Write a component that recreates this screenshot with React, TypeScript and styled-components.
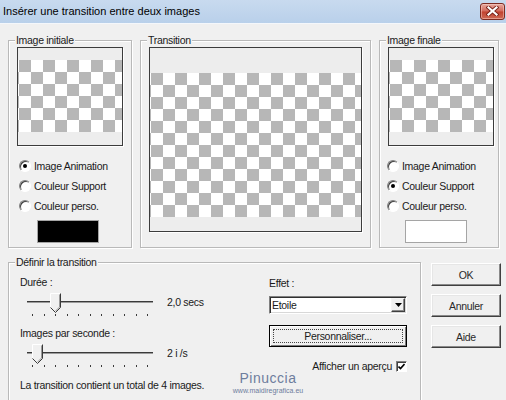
import * as React from 'react'
import styled, { createGlobalStyle } from 'styled-components'

const GlobalStyle = createGlobalStyle`
  html, body {
    margin: 0;
    padding: 0;
    background: #f0f0f0;
  }
  body {
    font-family: "Liberation Sans", Arial, sans-serif;
    font-size: 10.5px;
    letter-spacing: -0.3px;
    color: #1a1a1a;
  }
`

const Window = styled.div`
  width: 506px;
  height: 400px;
  overflow: hidden;
  background: #f0f0f0;
  display: flex;
  flex-direction: column;
`

const TitleBar = styled.div`
  box-sizing: border-box;
  height: 24px;
  flex: none;
  display: flex;
  align-items: center;
  justify-content: space-between;
  padding: 0 1px 1px 3px;
  background: linear-gradient(#c8daef, #b9d0ea);
  border-bottom: 1px solid #f4f7fb;
`

const Title = styled.span`
  font-size: 11px;
  letter-spacing: 0;
  color: #000;
`

const CloseButton = styled.div`
  box-sizing: border-box;
  width: 25px;
  height: 17px;
  display: flex;
  align-items: center;
  justify-content: center;
  border: 1px solid #7d2b22;
  border-radius: 3px;
  background: linear-gradient(#e7a99f, #d3685a 48%, #c1412f 52%, #cf6a55);
  box-shadow: inset 0 0 0 1px rgba(255, 220, 210, 0.45);
`

const Body = styled.div`
  padding: 10px 6px 0 8px;
`

const TopRow = styled.div`
  display: flex;
  gap: 8px;
  height: 214px;
`

const Group = styled.fieldset<{ $w: number; $h?: number; $pr?: number }>`
  position: relative;
  box-sizing: border-box;
  flex: none;
  width: ${p => p.$w}px;
  ${p => (p.$h ? `height: ${p.$h}px;` : '')}
  min-width: 0;
  margin: 0;
  padding: 0 ${p => p.$pr ?? 8}px 0 8px;
  border: 1px solid #b9b9b9;
  box-shadow: inset 1px 1px 0 #ffffff, 1px 1px 0 #ffffff;
`

const Legend = styled.legend`
  margin-left: -2px;
  padding: 0 1px;
  line-height: 13px;
  background: #f0f0f0;
`

const Frame = styled.div<{ $w: number; $h: number; $top: number }>`
  box-sizing: border-box;
  width: ${p => p.$w}px;
  height: ${p => p.$h}px;
  padding-top: ${p => p.$top}px;
  border: 1px solid #3c3c3c;
  box-shadow: 1px 1px 0 #ffffff;
  background: #ededed;
`

const Checker = styled.div<{ $rows: number }>`
  height: ${p => p.$rows * 12}px;
  background: repeating-conic-gradient(from 270deg, #b7b7b7 0 25%, #ffffff 0 50%) 1px 0 / 24px 24px;
`

const RadioList = styled.div<{ $indent: number }>`
  display: flex;
  flex-direction: column;
  margin: 10px 0 0 ${p => p.$indent}px;
`

const RadioRow = styled.label`
  display: flex;
  align-items: center;
  gap: 3px;
  height: 20px;
`

const Radio = styled.span<{ $on?: boolean }>`
  position: relative;
  box-sizing: border-box;
  width: 12px;
  height: 12px;
  border-radius: 50%;
  border: 1px solid;
  border-color: #808080 #ffffff #ffffff #808080;
  box-shadow: inset 1px 1px 0 #404040;
  background: #ffffff;

  &::after {
    content: '';
    display: ${p => (p.$on ? 'block' : 'none')};
    position: absolute;
    left: 3px;
    top: 3px;
    width: 4px;
    height: 4px;
    border-radius: 50%;
    background: #000;
  }
`

const Swatch = styled.div<{ $color: string }>`
  box-sizing: border-box;
  width: 62px;
  height: 23px;
  margin: 4px 0 0 18px;
  border: 1px solid #a5a5a5;
  background: ${p => p.$color};
`

const BottomRow = styled.div`
  display: flex;
  gap: 10px;
  margin-top: 8px;
`

const DefGrid = styled.div`
  position: relative;
  display: grid;
  grid-template-columns: 1fr 138px;
  padding: 7px 5px 0 3px;
`

const Column = styled.div`
  display: flex;
  flex-direction: column;
  align-items: flex-start;
`

const Label = styled.div<{ $mt?: number }>`
  line-height: 13px;
  margin-top: ${p => p.$mt ?? 0}px;
`

const SliderRow = styled.div`
  display: flex;
  gap: 14px;
  margin-top: 2px;
  padding-left: 7px;
`

const SliderBox = styled.div`
  position: relative;
  flex: none;
  width: 126px;
  height: 26px;
`

const Track = styled.div`
  position: absolute;
  left: 0;
  right: 0;
  top: 10px;
  border-top: 1px solid #3a3a3a;
  border-bottom: 1px solid #9c9c9c;
`

const ThumbSvg = styled.svg`
  position: absolute;
  top: 2px;
`

const Ticks = styled.div`
  position: absolute;
  left: 5px;
  right: 5px;
  top: 23px;
  display: flex;
  justify-content: space-between;
`

const Tick = styled.span`
  width: 1px;
  height: 2px;
  background: #3a3a3a;
`

const Value = styled.span`
  line-height: 22px;
`

const Summary = styled.div`
  line-height: 13px;
  margin-top: 11px;
`

const Combo = styled.div`
  box-sizing: border-box;
  width: 138px;
  height: 18px;
  margin-top: 6px;
  display: flex;
  align-items: center;
  justify-content: space-between;
  padding-left: 2px;
  border: 1px solid;
  border-color: #808080 #ffffff #ffffff #808080;
  box-shadow: inset 1px 1px 0 #303030, inset -1px -1px 0 #d8d8d8;
  background: #ffffff;
`

const ComboArrow = styled.span`
  box-sizing: border-box;
  width: 14px;
  height: 14px;
  margin-right: 1px;
  display: flex;
  align-items: center;
  justify-content: center;
  border: 1px solid;
  border-color: #f4f4f4 #404040 #404040 #f4f4f4;
  box-shadow: inset -1px -1px 0 #8a8a8a;
  background: #f0f0f0;
`

const PushButton = styled.div`
  position: relative;
  box-sizing: border-box;
  width: 138px;
  height: 22px;
  margin-top: 11px;
  display: flex;
  align-items: center;
  justify-content: center;
  border: 1px solid #000;
  box-shadow: inset 1px 1px 0 #ffffff, inset -1px -1px 0 #7a7a7a;
  background: #f0f0f0;

  &::after {
    content: '';
    position: absolute;
    inset: 3px;
    border: 1px dotted #444;
  }
`

const CheckRow = styled.label`
  align-self: stretch;
  display: flex;
  align-items: center;
  justify-content: flex-end;
  gap: 4px;
  height: 12px;
  margin-top: 13px;
`

const CheckBox = styled.span`
  box-sizing: border-box;
  width: 11px;
  height: 11px;
  display: flex;
  align-items: center;
  justify-content: center;
  border: 1px solid;
  border-color: #808080 #ffffff #ffffff #808080;
  box-shadow: inset 1px 1px 0 #404040;
  background: #ffffff;
`

const Watermark = styled.div`
  position: absolute;
  left: 211px;
  top: 101px;
  width: 80px;
  display: flex;
  flex-direction: column;
  align-items: center;
  color: #6e7d9d;
  letter-spacing: 0;
  pointer-events: none;
`

const WatermarkName = styled.span`
  font-size: 14px;
  line-height: 16px;
  letter-spacing: 0.5px;
`

const WatermarkSite = styled.span`
  font-size: 7px;
  line-height: 9px;
`

const ButtonColumn = styled.div`
  display: flex;
  flex-direction: column;
  gap: 8px;
  margin-top: 7px;
`

const DialogButton = styled.div`
  box-sizing: border-box;
  width: 70px;
  height: 23px;
  display: flex;
  align-items: center;
  justify-content: center;
  border: 1px solid;
  border-color: #ffffff #404040 #404040 #ffffff;
  box-shadow: inset -1px -1px 0 #8a8a8a, inset 1px 1px 0 #e6e6e6;
  background: #f0f0f0;
  color: #2a2a2a;
`

const Slider = ({ at }: { at: number }) => {
  const center = 5 + at * 11.5
  return (
    <SliderBox>
      <Track />
      <ThumbSvg width="11" height="20" viewBox="0 0 11 20" style={{ left: center - 5.5 }}>
        <path d="M0.5 0.5H10.5V14.5L5.5 19.5L0.5 14.5Z" fill="#f0f0f0" />
        <path d="M0.5 14.5V0.5H10.5" fill="none" stroke="#ffffff" />
        <path d="M10.5 0.5V14.5L5.5 19.5L0.5 14.5" fill="none" stroke="#3a3a3a" />
        <path d="M9.5 1.5V14L5.5 18" fill="none" stroke="#9a9a9a" />
      </ThumbSvg>
      <Ticks>
        {Array.from({ length: 11 }).map((_, i) => (
          <Tick key={i} />
        ))}
      </Ticks>
    </SliderBox>
  )
}

const OPTIONS = ['Image Animation', 'Couleur Support', 'Couleur perso.']

const SidePanel = ({ title, width, padRight, checked, swatch, indent }: {
  title: string
  width: number
  padRight: number
  checked: number
  swatch: string
  indent: number
}) => (
  <Group $w={width} $pr={padRight}>
    <Legend>{title}</Legend>
    <Frame $w={106} $h={99} $top={12}>
      <Checker $rows={6} />
    </Frame>
    <RadioList $indent={indent}>
      {OPTIONS.map((o, i) => (
        <RadioRow key={o}>
          <Radio $on={i === checked} />
          {o}
        </RadioRow>
      ))}
      <Swatch $color={swatch} />
    </RadioList>
  </Group>
)

export default function App() {
  return (
    <>
      <GlobalStyle />
      <Window>
        <TitleBar>
          <Title>Insérer une transition entre deux images</Title>
          <CloseButton>
            <svg width="13" height="10" viewBox="0 0 13 10">
              <path d="M2.5 1.5L10.5 8.5M10.5 1.5L2.5 8.5" stroke="#7a2219" strokeWidth="4" strokeLinecap="square" />
              <path d="M2.5 1.5L10.5 8.5M10.5 1.5L2.5 8.5" stroke="#ffffff" strokeWidth="2.2" strokeLinecap="square" />
            </svg>
          </CloseButton>
        </TitleBar>
        <Body>
          <TopRow>
            <SidePanel title="Image initiale" width={124} padRight={8} checked={0} swatch="#000000" indent={2} />
            <Group $w={231}>
              <Legend>Transition</Legend>
              <Frame $w={213} $h={185} $top={25}>
                <Checker $rows={12} />
              </Frame>
            </Group>
            <SidePanel title="Image finale" width={120} padRight={4} checked={1} swatch="#ffffff" indent={-1} />
          </TopRow>
          <BottomRow>
            <Group $w={413} $h={160}>
              <Legend>Définir la transition</Legend>
              <DefGrid>
                <Column>
                  <Label>Durée :</Label>
                  <SliderRow>
                    <Slider at={2} />
                    <Value>2,0 secs</Value>
                  </SliderRow>
                  <Label $mt={10}>Images par seconde :</Label>
                  <SliderRow>
                    <Slider at={0.5} />
                    <Value>2 i /s</Value>
                  </SliderRow>
                  <Summary>La transition contient un total de 4 images.</Summary>
                </Column>
                <Column>
                  <Label $mt={1}>Effet :</Label>
                  <Combo>
                    <span>Etoile</span>
                    <ComboArrow>
                      <svg width="7" height="4" viewBox="0 0 7 4">
                        <path d="M0 0H7L3.5 4Z" fill="#000" />
                      </svg>
                    </ComboArrow>
                  </Combo>
                  <PushButton>Personnaliser...</PushButton>
                  <CheckRow>
                    Afficher un aperçu
                    <CheckBox>
                      <svg width="7" height="7" viewBox="0 0 7 7">
                        <path d="M0.5 3.5L2.5 5.5L6.5 1" fill="none" stroke="#000" strokeWidth="1.6" />
                      </svg>
                    </CheckBox>
                  </CheckRow>
                </Column>
                <Watermark>
                  <WatermarkName>Pinuccia</WatermarkName>
                  <WatermarkSite>www.maidiregrafica.eu</WatermarkSite>
                </Watermark>
              </DefGrid>
            </Group>
            <ButtonColumn>
              <DialogButton>OK</DialogButton>
              <DialogButton>Annuler</DialogButton>
              <DialogButton>Aide</DialogButton>
            </ButtonColumn>
          </BottomRow>
        </Body>
      </Window>
    </>
  )
}
